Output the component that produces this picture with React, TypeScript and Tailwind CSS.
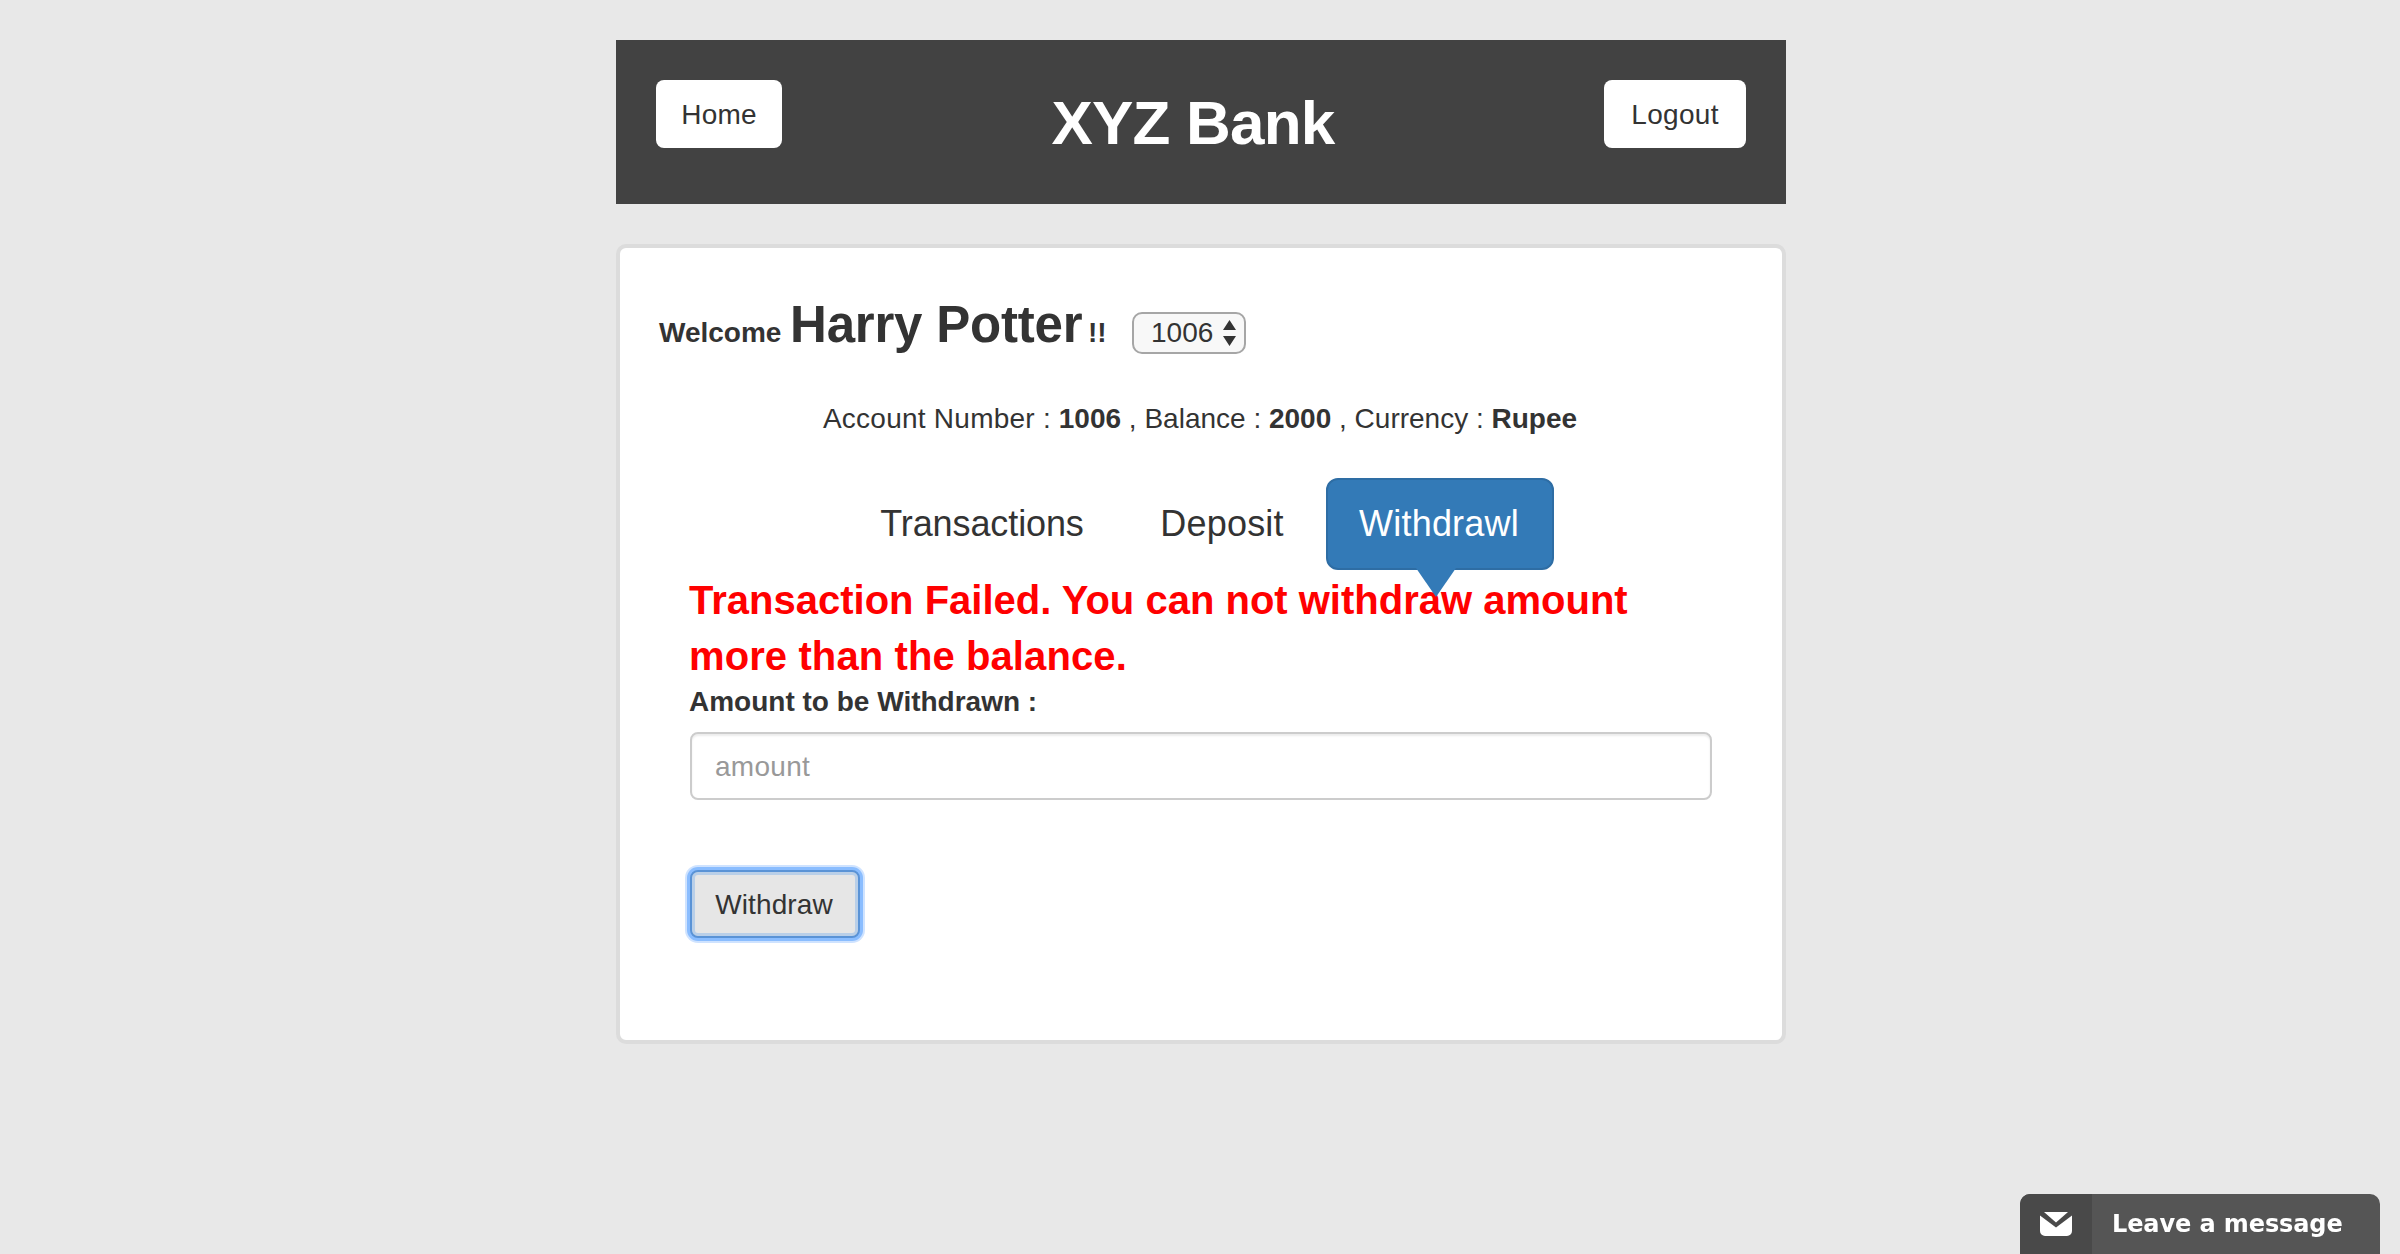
import type { ReactNode } from 'react';

function HeaderButton({ className, children }: { className: string; children: ReactNode }) {
  return (
    <button className={`h-[68px] rounded-lg bg-white text-center text-[28px] leading-[70px] text-[#333] ${className}`}>
      {children}
    </button>
  );
}

function Header() {
  return (
    <header className="flex h-[164px] w-full items-start bg-[#424242] p-10">
      <HeaderButton className="w-[126px] tracking-[0.2px]">Home</HeaderButton>
      <strong className="flex-1 text-center text-[62px] leading-[85px] font-bold tracking-[-0.8px] text-white">
        XYZ Bank
      </strong>
      <HeaderButton className="w-[142px] tracking-[0.3px]">Logout</HeaderButton>
    </header>
  );
}

function AccountSelect() {
  return (
    <div className="flex h-[42px] w-[114px] items-center rounded-[10px] border-2 border-[#a6a6a6] bg-[#f8f8f8] pl-[17px] text-[28px] leading-[40px]">
      <span className="w-[72px]">1006</span>
      <svg width="13" height="26" viewBox="0 0 13 26" fill="#333">
        <path d="M6.5 0 13 10H0zM6.5 26 0 16h13z" />
      </svg>
    </div>
  );
}

function Welcome() {
  return (
    <div className="flex items-baseline pl-[39px] font-bold whitespace-nowrap">
      <span className="w-[131px] text-[28px] leading-10">Welcome</span>
      <span className="w-[298px] text-[51px] leading-[60px] tracking-[-0.2px]">Harry Potter</span>
      <span className="w-[44px] text-[28px] leading-10">!!</span>
      <div className="font-normal">
        <AccountSelect />
      </div>
    </div>
  );
}

function Tabs() {
  return (
    <nav className="-ml-0.5 mt-[39px] flex justify-center gap-2 text-[36px] leading-[88px]">
      <button className="h-[92px] w-[272px] tracking-[-0.1px]">Transactions</button>
      <button className="h-[92px] w-[192px] tracking-[0.2px]">Deposit</button>
      <button className="relative z-10 h-[92px] w-[228px] rounded-xl border-2 border-[#2e6da4] bg-[#337ab7] tracking-[0.2px] text-white">
        <span className="-ml-0.5">Withdrawl</span>
        <svg className="absolute top-[88px] left-[88px]" width="40" height="29" viewBox="0 0 40 29">
          <path d="M0 0h40L20 29z" fill="#337ab7" />
        </svg>
      </button>
    </nav>
  );
}

function WithdrawForm() {
  return (
    <form className="mt-0.5 flex flex-col items-start pl-[69px]">
      <p className="w-[1022px] text-[40px] leading-[56px] font-bold text-[#f00]">
        Transaction Failed. You can not withdraw amount
        <br />
        <span className="tracking-[0.1px]">more than the balance.</span>
      </p>
      <label htmlFor="amount" className="text-[28px] leading-9 font-bold">
        Amount to be Withdrawn :
      </label>
      <input
        id="amount"
        placeholder="amount"
        className="mt-3 ml-px h-[68px] w-[1022px] rounded-lg border-2 border-[#ccc] bg-white px-[23px] pt-0.5 text-[28px] tracking-[0.3px] shadow-[inset_0_2px_2px_rgba(0,0,0,0.075)] placeholder:text-[#999]"
      />
      <button
        type="button"
        className="mt-[70px] ml-px h-[68px] w-[170px] rounded-lg border-2 border-[#5a93d6] bg-[#e6e6e6] text-[28px] leading-[66px] tracking-[0.1px] shadow-[0_0_0_3px_#8abdff,0_0_0_5px_#cfe3ff,inset_0_0_0_3px_#b9cfe8]"
      >
        <span className="-ml-0.5">Withdraw</span>
      </button>
    </form>
  );
}

function ChatBar() {
  return (
    <div className="fixed right-5 bottom-0 flex h-[60px] w-[360px] overflow-hidden rounded-t-[10px] bg-[#555] text-white">
      <div className="h-full w-[72px] bg-[#494949] pt-[18px] pl-5">
        <svg width="32" height="24" viewBox="0 0 32 24" fill="#fff">
          <path d="M4 0h24L16 10.5z" />
          <path d="M0 3.5 16 15.5 32 3.5V19a5 5 0 0 1-5 5H5a5 5 0 0 1-5-5z" />
        </svg>
      </div>
      <span className="pl-5 font-['DejaVu_Sans'] text-[24px] leading-[60px] font-bold tracking-[-0.1px] whitespace-nowrap">
        Leave a message
      </span>
    </div>
  );
}

export default function App() {
  return (
    <div className="h-[1254px] overflow-hidden bg-[#e8e8e8] pt-10 font-['Liberation_Sans',Arial,sans-serif] text-[#333]">
      <div className="ml-[616px] w-[1170px]">
        <Header />
        <main className="mt-10 h-[800px] rounded-[10px] border-4 border-[#dcdcdc] bg-white pt-[47px]">
          <Welcome />
          <p className="-ml-0.5 mt-11 text-center text-[28px] leading-10">
            <span className="tracking-[0.25px]">Account Number :</span> <strong>1006</strong> , Balance :{' '}
            <strong>2000</strong> , Currency : <strong>Rupee</strong>
          </p>
          <Tabs />
          <WithdrawForm />
        </main>
      </div>
      <ChatBar />
    </div>
  );
}
